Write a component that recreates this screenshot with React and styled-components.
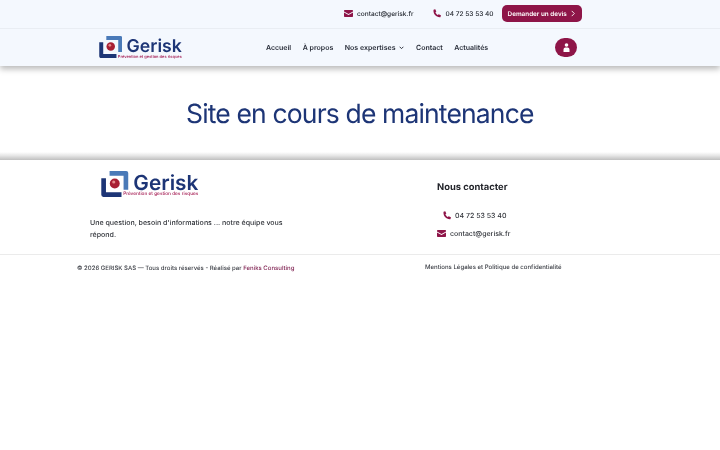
import React from 'react';
import styled, { createGlobalStyle, css } from 'styled-components';

const GlobalStyle = createGlobalStyle`
  html, body {
    margin: 0;
    padding: 0;
    background: #fff;
    font-family: Inter, "Liberation Sans", sans-serif;
    color: #2a2f3a;
    text-rendering: geometricPrecision;
  }
  * { box-sizing: border-box; }
`;

// own layer, so small text gets plain grey antialiasing
const softText = css`
  will-change: transform;
`;

const Page = styled.div`
  width: 720px;
  height: 450px;
  overflow: hidden;
  background: #fff;
`;

const Header = styled.header`
  background: #f4f8fe;
  box-shadow: 0 3px 6px rgba(0, 0, 0, 0.28);
  position: relative;
`;

const TopBar = styled.div`
  ${softText}
  height: 29px;
  display: flex;
  align-items: center;
  padding: 0 0 1px 344px;
  border-bottom: 1px solid #e9edf3;
  font-size: 6.55px;
  font-weight: 500;
  white-space: nowrap;
`;

const TopLink = styled.a`
  display: flex;
  align-items: center;
  gap: ${(p) => p.$gap || 4}px;
  margin-right: ${(p) => p.$after || 0}px;
  color: #23272f;
  text-decoration: none;
`;

const QuoteButton = styled.a`
  height: 17px;
  width: 80px;
  flex-shrink: 0;
  background: #8e1548;
  border-radius: 5px;
  color: #fff;
  font-size: 6.35px;
  font-weight: 600;
  display: flex;
  align-items: center;
  justify-content: space-between;
  padding: 0 6px;
`;

const NavRow = styled.nav`
  ${softText}
  height: 37px;
  display: flex;
  align-items: center;
  padding: 0 143px 0 99px;
`;

const Menu = styled.div`
  display: flex;
  align-items: center;
  gap: 11.5px;
  margin-left: 83px;
  font-size: 7px;
  font-weight: 600;
  color: #272c38;
  white-space: nowrap;
`;

const MenuItem = styled.span`
  display: flex;
  align-items: center;
  gap: 4px;
`;

const Avatar = styled.div`
  margin-left: auto;
  width: 22px;
  height: 19px;
  border-radius: 10px;
  background: #8e1548;
  display: flex;
  align-items: center;
  justify-content: center;
`;

const Main = styled.main`
  height: 86px;
  display: flex;
  align-items: center;
  justify-content: center;
  background: #fff;
`;

const Title = styled.h1`
  ${softText}
  margin: 9px 0 0;
  font-size: 26.5px;
  font-weight: 400;
  letter-spacing: -0.85px;
  color: #1d3576;
  white-space: nowrap;
`;

const Shade = styled.div`
  height: 8px;
  background: linear-gradient(#ffffff, #e6e6e6 45%, #bfbfbf);
`;

const FooterTop = styled.section`
  height: 95px;
  display: grid;
  grid-template-columns: 347px 1fr;
  border-bottom: 1px solid #ebebeb;
`;

const AboutColumn = styled.div`
  ${softText}
  padding: 11px 0 0 90px;
`;

const FooterLogo = styled.div`
  margin-left: 11px;
`;

const Blurb = styled.p`
  margin: 19px 0 0;
  width: 210px;
  font-size: 7.05px;
  font-weight: 500;
  line-height: 11.5px;
  color: #2f3238;
`;

const ContactColumn = styled.div`
  ${softText}
  padding: 21px 0 0 90px;
`;

const ContactTitle = styled.h3`
  margin: 0 0 14px;
  font-size: 9.4px;
  line-height: 14px;
  font-weight: 700;
  color: #23252b;
  white-space: nowrap;
`;

const ContactLine = styled.div`
  display: flex;
  align-items: center;
  gap: ${(p) => p.$gap}px;
  margin: 0 0 ${(p) => p.$after || 0}px ${(p) => p.$indent || 0}px;
  height: 12px;
  font-size: 7px;
  font-weight: 500;
  color: #2f3238;
  white-space: nowrap;
`;

const FooterBottom = styled.div`
  ${softText}
  display: grid;
  grid-template-columns: 348px 1fr;
  padding: 9px 0 0 77px;
  font-size: 6.03px;
  font-weight: 500;
  color: #3a3d44;
  white-space: nowrap;
`;

const Copy = styled.div`
  padding-top: 1px;
`;

const Legal = styled.div`
  font-size: 6.05px;
`;

const Feniks = styled.a`
  color: #7d1d4e;
`;

const LogoWrap = styled.div`
  display: flex;
  align-items: flex-start;
  flex-shrink: 0;
  width: ${(p) => p.$size * 3.65}px;
  height: ${(p) => p.$size}px;
  svg { flex-shrink: 0; }
`;

const LogoText = styled.div`
  display: flex;
  flex-direction: column;
  align-items: flex-end;
  margin-left: ${(p) => p.$size * -0.2}px;
  padding-top: ${(p) => p.$size * 0.13}px;
`;

const LogoName = styled.span`
  font-size: ${(p) => p.$size * 0.77}px;
  line-height: ${(p) => p.$size * 0.66}px;
  font-weight: 600;
  color: #1d3576;
`;

const LogoTag = styled.span`
  font-size: ${(p) => p.$size * 0.175}px;
  line-height: ${(p) => p.$size * 0.22}px;
  font-weight: 500;
  white-space: nowrap;
  color: #a3174f;
`;

const Logo = ({ size }) => (
  <LogoWrap $size={size}>
    <svg width={size * 1.02} height={size * 0.96} viewBox="0 0 26 25">
      <path d="M8 0h16a2 2 0 0 1 2 2v16h-4.500V4.500H8z" fill="#4a7ab8" />
      <path d="M0 7h4.500v13.500H19.500V25H2a2 2 0 0 1-2-2z" fill="#1d3576" />
      <circle cx="13" cy="12" r="4.800" fill="#a81f33" />
      <circle cx="12" cy="10.600" r="1.500" fill="#e58b8b" />
    </svg>
    <LogoText $size={size}>
      <LogoName $size={size}>Gerisk</LogoName>
      <LogoTag $size={size}>Prévention et gestion des risques</LogoTag>
    </LogoText>
  </LogoWrap>
);

const MailIcon = ({ w = 9, h = 7 }) => (
  <svg width={w} height={h} viewBox="0 0 18 14">
    <path d="M1.500 0h15A1.500 1.500 0 0 1 18 1.500V3L9 8 0 3V1.500A1.500 1.500 0 0 1 1.500 0z" fill="#8e1548" />
    <path d="M0 5l9 5 9-5v7.500a1.500 1.500 0 0 1-1.500 1.500h-15A1.500 1.500 0 0 1 0 12.500z" fill="#8e1548" />
  </svg>
);

const PhoneIcon = ({ s = 9 }) => (
  <svg width={s} height={s} viewBox="0 0 24 24">
    <path
      d="M5.500 1.500l3.200-.8 2.800 6-2.400 2.200c1 2.800 3.200 5.600 6.400 7.300l2.300-2.300 6 3-.9 3.500c-.3 1-1.200 1.600-2.200 1.500C10.500 20.900 3.600 13.300 3.900 3.700c0-1 .6-1.900 1.600-2.200z"
      fill="#8e1548"
    />
  </svg>
);

export default function App() {
  return (
    <Page>
      <GlobalStyle />
      <Header>
        <TopBar>
          <TopLink $gap={4} $after={19}>
            <MailIcon />
            contact@gerisk.fr
          </TopLink>
          <TopLink $gap={4} $after={8}>
            <PhoneIcon />
            04 72 53 53 40
          </TopLink>
          <QuoteButton>
            Demander un devis
            <svg width="6" height="7" viewBox="0 0 6 8">
              <path d="M1.500 1l3 3-3 3" fill="none" stroke="#fff" strokeWidth="1" />
            </svg>
          </QuoteButton>
        </TopBar>
        <NavRow>
          <Logo size={23} />
          <Menu>
            <MenuItem>Accueil</MenuItem>
            <MenuItem>À propos</MenuItem>
            <MenuItem>
              Nos expertises
              <svg width="5" height="4" viewBox="0 0 8 6">
                <path d="M1 1l3 3 3-3" fill="none" stroke="#272c38" strokeWidth="1.500" />
              </svg>
            </MenuItem>
            <MenuItem>Contact</MenuItem>
            <MenuItem>Actualités</MenuItem>
          </Menu>
          <Avatar>
            <svg width="7" height="9" viewBox="0 0 7 9">
              <circle cx="3.500" cy="2" r="1.800" fill="#fff" />
              <path d="M0.500 9V6.500a2 2 0 0 1 2-2h2a2 2 0 0 1 2 2V9z" fill="#fff" />
            </svg>
          </Avatar>
        </NavRow>
      </Header>
      <Main>
        <Title>Site en cours de maintenance</Title>
      </Main>
      <Shade />
      <FooterTop>
        <AboutColumn>
          <FooterLogo>
            <Logo size={27} />
          </FooterLogo>
          <Blurb>Une question, besoin d'informations ... notre équipe vous répond.</Blurb>
        </AboutColumn>
        <ContactColumn>
          <ContactTitle>Nous contacter</ContactTitle>
          <ContactLine $gap={4} $indent={5} $after={6}>
            <PhoneIcon s={9} />
            04 72 53 53 40
          </ContactLine>
          <ContactLine $gap={4}>
            <MailIcon />
            contact@gerisk.fr
          </ContactLine>
        </ContactColumn>
      </FooterTop>
      <FooterBottom>
        <Copy>
          © 2026 GERISK SAS — Tous droits réservés - Réalisé par <Feniks>Feniks Consulting</Feniks>
        </Copy>
        <Legal>Mentions Légales et Politique de confidentialité</Legal>
      </FooterBottom>
    </Page>
  );
}
